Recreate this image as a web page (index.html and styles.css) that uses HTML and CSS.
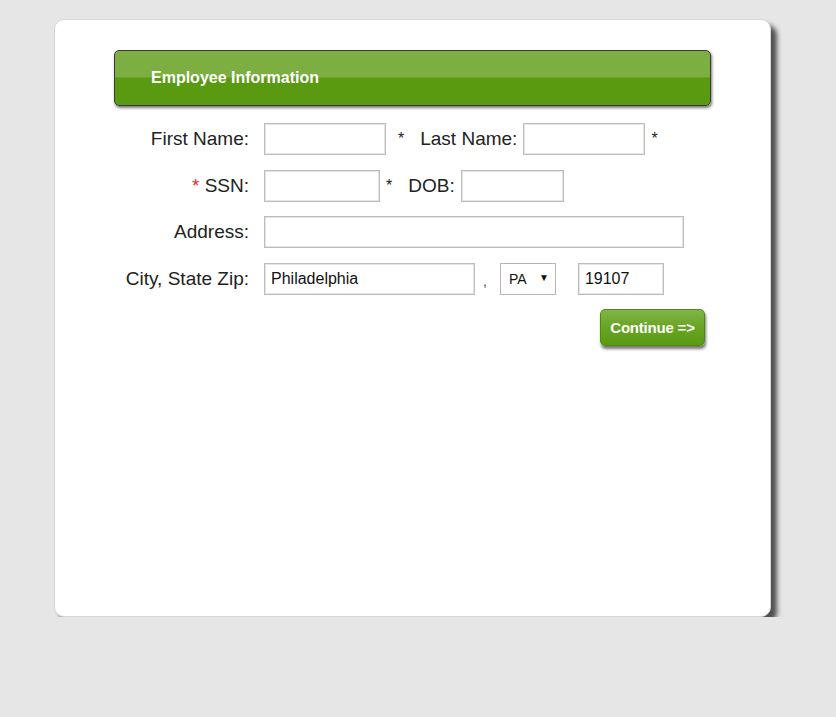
FILE: index.html
```html
<!DOCTYPE html>
<html>
<head>
<meta http-equiv="Content-Type" content="text/html; charset=utf-8" />
<title>Employee Information</title>
<link rel="stylesheet" href="styles.css">
</head>

<body>
	<div class="card">
		<div class="panel-head">Employee Information</div>

		<form class="emp-form">
			<div class="row">
				<label class="lbl">First Name:</label>
				<input type="text" class="txt w-first">
				<span class="req req-first">*</span>
				<label class="lbl-inline">Last Name:</label>
				<input type="text" class="txt w-first">
				<span class="req req-last">*</span>
			</div>

			<div class="row">
				<label class="lbl"><span class="red">*</span> SSN:</label>
				<input type="text" class="txt w-ssn">
				<span class="req req-ssn">*</span>
				<label class="lbl-inline">DOB:</label>
				<input type="text" class="txt w-dob">
			</div>

			<div class="row">
				<label class="lbl">Address:</label>
				<input type="text" class="txt w-addr">
			</div>

			<div class="row">
				<label class="lbl">City, State Zip:</label>
				<input type="text" class="txt w-city" value="Philadelphia">
				<span class="comma">,</span>
				<span class="sel-wrap">
					<select class="sel">
						<option>PA</option>
					</select>
					<span class="sel-arrow">&#9660;</span>
				</span>
				<input type="text" class="txt w-zip" value="19107">
			</div>

			<div class="btn-row">
				<button type="button" class="btn">Continue =&gt;</button>
			</div>
		</form>
	</div>
</body>
</html>
```

FILE: styles.css
```css
*{
	padding: 0;
	margin: 0;
	box-sizing: border-box;
}
body{
	background: #e6e6e6;
	font-family: "Liberation Sans", Arial, sans-serif;
	color: #222;
	padding: 19px 0 0 54px;
}
.card{
	width: 717px;
	height: 598px;
	background: #fff;
	border: 1px solid #d6d6d6;
	border-radius: 10px;
	box-shadow: 6px 6px 5px #505050;
	padding: 30px 59px 0 59px;
}
.panel-head{
	height: 56px;
	border: 1px solid #3a3a3a;
	border-radius: 5px;
	background: linear-gradient(to bottom, #7cae41 0%, #7cae41 48%, #5a9a10 50%, #5a9a10 100%);
	box-shadow: 1px 2px 3px #777;
	color: #fff;
	font-weight: bold;
	font-size: 16px;
	line-height: 54px;
	padding-left: 36px;
}
.emp-form{
	margin-top: 17px;
}
.row{
	display: flex;
	align-items: center;
	height: 32px;
	margin-bottom: 14.5px;
	font-size: 19px;
}
.lbl{
	width: 135px;
	text-align: right;
	margin-right: 15px;
}
.red{
	color: #e8262b;
}
.txt{
	height: 32px;
	border: 1px solid #bdbdbd;
	box-shadow: inset 0 0 0 1px #e4e4e4;
	font-family: "Liberation Sans", Arial, sans-serif;
	font-size: 16px;
	color: #111;
	padding: 0 6px;
	outline: none;
}
.w-first{ width: 122px; }
.w-ssn{ width: 116px; }
.w-dob{ width: 103px; }
.w-addr{ width: 420px; }
.w-city{ width: 211px; }
.w-zip{ width: 86px; }
.req{
	font-size: 16px;
	line-height: 18px;
}
.req-first{ margin: 0 16px 0 12px; }
.req-last{ margin-left: 6px; }
.req-ssn{ margin: 0 16px 0 6px; }
.lbl-inline{
	margin-right: 6px;
}
.comma{
	font-size: 14px;
	margin: 4px 13px 0 8px;
	color: #444;
}
.sel-wrap{
	position: relative;
	display: inline-block;
	width: 56px;
	height: 32px;
	margin-right: 22px;
}
.sel{
	appearance: none;
	-webkit-appearance: none;
	width: 56px;
	height: 32px;
	border: 1px solid #b5b5b5;
	border-radius: 0;
	background: #fff;
	font-family: "Liberation Sans", Arial, sans-serif;
	font-size: 14px;
	color: #111;
	padding-left: 8px;
	outline: none;
}
.sel-arrow{
	position: absolute;
	right: 7px;
	top: 9px;
	font-size: 10px;
	color: #111;
	pointer-events: none;
}
.btn-row{
	display: flex;
	justify-content: flex-end;
	margin-top: 0.5px;
	padding-right: 6px;
}
.btn{
	width: 105px;
	height: 37px;
	border: 1px solid #4d8a12;
	border-radius: 5px;
	background: linear-gradient(to bottom, #82b548 0%, #6aa526 45%, #5a9a10 100%);
	box-shadow: 1px 3px 3px #777;
	color: #fff;
	font-family: "Liberation Sans", Arial, sans-serif;
	font-weight: bold;
	font-size: 15px;
	letter-spacing: -0.2px;
	cursor: pointer;
}
```
